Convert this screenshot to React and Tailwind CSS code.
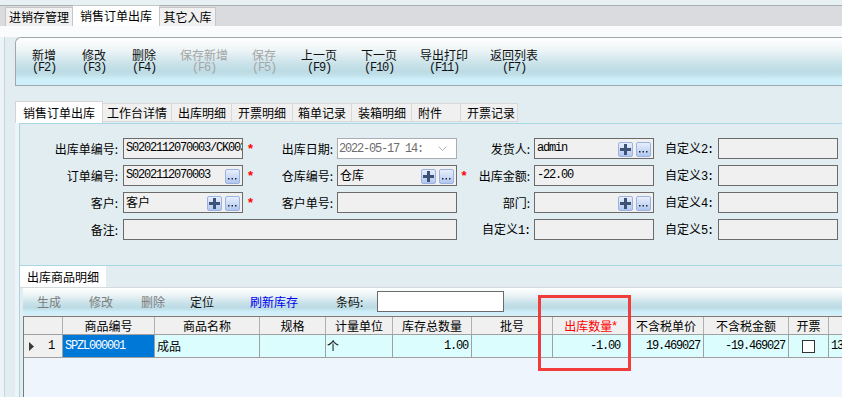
import React from "react";

const monoTxt = "font-['Liberation_Mono',monospace] text-[12px] tracking-[-1.2px]";

function PlusBtn() {
  return (
    <div className="w-[15px] h-[15px] shrink-0 border border-[#9ab3e0] rounded-[2px] bg-[linear-gradient(to_bottom,#e8effc,#b2c7ef)] flex items-center justify-center">
      <svg width="11" height="11" viewBox="0 0 11 11">
        <rect x="4" y="0" width="3" height="11" fill="#3d5276" />
        <rect x="0" y="4" width="11" height="3" fill="#3d5276" />
      </svg>
    </div>
  );
}

function DotsBtn() {
  return (
    <div className="w-[15px] h-[15px] shrink-0 border border-[#9ab3e0] rounded-[2px] bg-[linear-gradient(to_bottom,#e8effc,#b2c7ef)] flex items-end justify-center pb-[3px]">
      <svg width="9" height="2" viewBox="0 0 9 2">
        <rect x="0" y="0" width="1.5" height="1.5" fill="#1e2a3c" />
        <rect x="3.5" y="0" width="1.5" height="1.5" fill="#1e2a3c" />
        <rect x="7" y="0" width="1.5" height="1.5" fill="#1e2a3c" />
      </svg>
    </div>
  );
}

function Field({ w = "w-[120px]", ml = "", text, cn = false, plus = false, dots = false }) {
  return (
    <div className={`${w} ${ml} h-[21px] shrink-0 border border-[#6b6b6b] bg-[#f0f0f0] flex items-start pl-[2px] pt-[2px] overflow-hidden`}>
      {text ? (
        cn ? (
          <span className="text-[12px] leading-[14px] whitespace-nowrap">{text}</span>
        ) : (
          <span className={`${monoTxt} leading-[14px] whitespace-nowrap`}>{text}</span>
        )
      ) : null}
      {(plus || dots) && (
        <div className="ml-auto self-center flex gap-[3px] mr-[2px]">
          {plus && <PlusBtn />}
          {dots && <DotsBtn />}
        </div>
      )}
    </div>
  );
}

function DateField() {
  return (
    <div className="w-[120px] ml-[4px] h-[21px] shrink-0 border border-[#abadb3] bg-white flex items-center pl-[1px]">
      <span className={`${monoTxt} leading-[14px] text-[#6d6d6d] whitespace-nowrap`}>2022-05-17 14:</span>
      <svg className="ml-auto mr-[9px]" width="9" height="6" viewBox="0 0 9 6">
        <polyline points="0.5,0.5 4.5,4.5 8.5,0.5" fill="none" stroke="#b4b4b4" strokeWidth="1" />
      </svg>
    </div>
  );
}

function Label({ w, children }) {
  return (
    <div className={`${w} shrink-0 text-right text-[12px] leading-[14px] whitespace-nowrap`}>{children}</div>
  );
}

function Star({ w = "w-[15px]", show = true }) {
  return (
    <div className={`${w} shrink-0 flex justify-center`}>
      {show && <span className="text-[#ff0000] text-[13px] leading-[14px] font-['Liberation_Sans',sans-serif] font-bold">*</span>}
    </div>
  );
}

function Zdy({ n }) {
  return (
    <>
      自定义<span className={monoTxt}>{n}:</span>
    </>
  );
}

function TBtn({ w, label, k, disabled }) {
  return (
    <div className={`${w} shrink-0 flex flex-col items-center ${disabled ? "text-[#a5a5a5]" : "text-[#111]"}`}>
      <span className="text-[12px] leading-[12px] whitespace-nowrap">{label}</span>
      <span className={`${monoTxt} leading-[12px] mt-[1px] whitespace-nowrap`}>({k})</span>
    </div>
  );
}

const toolbarBg =
  "bg-[linear-gradient(to_bottom,#ffffff_0%,#eef5f7_25%,#c9e2e9_55%,#bcdbe4_72%,#c2e2ec_80%,#cfeffa_88%,#cfeffa_100%)]";

const cols = [
  { w: "w-[39px]", h: "" },
  { w: "w-[92px]", h: "商品编号" },
  { w: "w-[105px]", h: "商品名称" },
  { w: "w-[66px]", h: "规格" },
  { w: "w-[67px]", h: "计量单位" },
  { w: "w-[79px]", h: "库存总数量" },
  { w: "w-[81px]", h: "批号" },
  { w: "w-[76px]", h: "出库数量*", red: true },
  { w: "w-[75px]", h: "不含税单价" },
  { w: "w-[85px]", h: "不含税金额" },
  { w: "w-[40px]", h: "开票" },
  { w: "w-[80px]", h: "含税单价" },
];

export default function App() {
  return (
    <div className="relative w-[842px] h-[397px] overflow-hidden bg-[#e2edf1] text-black font-['Noto_Sans_CJK_SC','Noto_Sans',sans-serif]">
      {/* top tab bar */}
      <div className="h-[5px] bg-[#e7f0f3]" />
      <div className="h-[21px] bg-[#d9dbde] border-t border-[#a9b1b5] flex items-end pl-[5px]">
        <div className="w-[68px] h-[19px] bg-[#f0f0f0] border border-b-0 border-[#c6c6c6] flex items-center justify-center text-[12px] leading-[14px]">进销存管理</div>
        <div className="w-[87px] h-[21px] bg-white border-t border-r border-[#c6c6c6] flex items-center justify-center text-[12px] leading-[14px]">销售订单出库</div>
        <div className="w-[56px] h-[19px] bg-[#f0f0f0] border border-l-0 border-b-0 border-[#c6c6c6] flex items-center justify-center text-[12px] leading-[14px]">其它入库</div>
      </div>
      <div className="h-[11px] bg-[#f9fbfd]" />

      <div className="flex h-[360px]">
        {/* left gutter */}
        <div className="w-[15px] shrink-0 flex">
          <div className="w-[5px] bg-[#edf4f7] border-r border-[#c9d6dc]" />
        </div>

        <div className="flex-1 flex flex-col min-w-0">
          {/* main toolbar */}
          <div className={`h-[49px] shrink-0 border-t border-b border-l border-[#9fa8ad] rounded-tl-[6px] ${toolbarBg} flex items-center pl-[3px]`}>
            <TBtn w="w-[50px]" label="新增" k="F2" />
            <TBtn w="w-[50px]" label="修改" k="F3" />
            <TBtn w="w-[50px]" label="删除" k="F4" />
            <TBtn w="w-[70px]" label="保存新增" k="F6" disabled />
            <TBtn w="w-[50px]" label="保存" k="F5" disabled />
            <TBtn w="w-[60px]" label="上一页" k="F9" />
            <TBtn w="w-[60px]" label="下一页" k="F10" />
            <TBtn w="w-[70px]" label="导出打印" k="F11" />
            <TBtn w="w-[70px]" label="返回列表" k="F7" />
          </div>

          <div className="h-[15px] shrink-0" />

          {/* second tab row */}
          <div className="h-[22px] shrink-0 flex items-end text-[12px] leading-[14px]">
            <div className="w-[88px] h-[22px] bg-white border border-b-0 border-[#d4d4d4] flex items-center justify-center">销售订单出库</div>
            <div className="w-[69px] h-[19px] mb-[1px] bg-[#f0f0f0] border border-l-0 border-[#d9d9d9] flex items-center pl-[4px]">工作台详情</div>
            <div className="w-[60px] h-[19px] mb-[1px] bg-[#f0f0f0] border border-l-0 border-[#d9d9d9] flex items-center pl-[6px]">出库明细</div>
            <div className="w-[61px] h-[19px] mb-[1px] bg-[#f0f0f0] border border-l-0 border-[#d9d9d9] flex items-center pl-[6px]">开票明细</div>
            <div className="w-[59px] h-[19px] mb-[1px] bg-[#f0f0f0] border border-l-0 border-[#d9d9d9] flex items-center pl-[5px]">箱单记录</div>
            <div className="w-[60px] h-[19px] mb-[1px] bg-[#f0f0f0] border border-l-0 border-[#d9d9d9] flex items-center pl-[6px]">装箱明细</div>
            <div className="w-[49px] h-[19px] mb-[1px] bg-[#f0f0f0] border border-l-0 border-[#d9d9d9] flex items-center pl-[6px]">附件</div>
            <div className="w-[57px] h-[19px] mb-[1px] bg-[#f0f0f0] border border-l-0 border-[#d9d9d9] flex items-center pl-[6px]">开票记录</div>
          </div>

          {/* body */}
          <div className="flex-1 flex pl-[4px] bg-[#edf4f7] min-h-0">
            <div className="flex-1 flex flex-col border-l border-[#a9d3df] bg-[#e2edf1] min-w-0">
              {/* form */}
              <div className="h-[143px] shrink-0 border-t border-b border-[#a8d6e2] pt-[14px] flex flex-col gap-[6px]">
                <div className="flex items-center h-[21px]">
                  <Label w="w-[98px]">出库单编号:</Label>
                  <Field ml="ml-[5px]" text="S0202112070003/CK0031" />
                  <Star />
                  <Label w="w-[75px]">出库日期:</Label>
                  <DateField />
                  <Star w="w-[14px]" show={false} />
                  <Label w="w-[59px]">发货人:</Label>
                  <Field ml="ml-[4px]" text="admin" plus dots />
                  <Label w="w-[59px]"><Zdy n="2" /></Label>
                  <Field ml="ml-[5px]" />
                </div>
                <div className="flex items-center h-[21px]">
                  <Label w="w-[98px]">订单编号:</Label>
                  <Field ml="ml-[5px]" text="S0202112070003" dots />
                  <Star />
                  <Label w="w-[75px]">仓库编号:</Label>
                  <Field ml="ml-[4px]" text="仓库" cn plus dots />
                  <Star w="w-[14px]" />
                  <Label w="w-[59px]">出库金额:</Label>
                  <Field ml="ml-[4px]" text="-22.00" />
                  <Label w="w-[59px]"><Zdy n="3" /></Label>
                  <Field ml="ml-[5px]" />
                </div>
                <div className="flex items-center h-[21px]">
                  <Label w="w-[98px]">客户:</Label>
                  <Field ml="ml-[5px]" text="客户" cn plus dots />
                  <Star />
                  <Label w="w-[75px]">客户单号:</Label>
                  <Field ml="ml-[4px]" />
                  <Star w="w-[14px]" show={false} />
                  <Label w="w-[59px]">部门:</Label>
                  <Field ml="ml-[4px]" plus dots />
                  <Label w="w-[59px]"><Zdy n="4" /></Label>
                  <Field ml="ml-[5px]" />
                </div>
                <div className="flex items-center h-[21px]">
                  <Label w="w-[98px]">备注:</Label>
                  <Field w="w-[334px]" ml="ml-[5px]" />
                  <Star w="w-[14px]" show={false} />
                  <Label w="w-[59px]"><Zdy n="1" /></Label>
                  <Field ml="ml-[4px]" />
                  <Label w="w-[59px]"><Zdy n="5" /></Label>
                  <Field ml="ml-[5px]" />
                </div>
              </div>

              {/* detail tab */}
              <div className="h-[22px] shrink-0 flex items-end border-b border-[#d5dadc]">
                <div className="w-[86px] h-[21px] bg-white flex items-center justify-center text-[12px] leading-[14px]">出库商品明细</div>
              </div>

              {/* detail toolbar */}
              <div className={`ml-[3px] h-[27px] shrink-0 ${toolbarBg} flex items-center pl-[14px] text-[12px] leading-[14px]`}>
                <div className="w-[52px] shrink-0 text-[#7d7d7d]">生成</div>
                <div className="w-[52px] shrink-0 text-[#7d7d7d]">修改</div>
                <div className="w-[49px] shrink-0 text-[#7d7d7d]">删除</div>
                <div className="w-[60px] shrink-0 text-[#111]">定位</div>
                <div className="w-[86px] shrink-0 text-[#0000f0]">刷新库存</div>
                <div className="w-[41px] shrink-0 text-[#111]">条码:</div>
                <div className="w-[127px] h-[21px] shrink-0 bg-white border border-[#6b6b6b]" />
              </div>

              <div className="h-[1px] shrink-0" />

              {/* grid */}
              <div className="ml-[3px] flex-1 border-l border-t border-[#7a7a7a] bg-[#eef5fc] overflow-hidden">
                <div className="flex h-[18px] bg-[#f0f0f0] border-b border-[#a0a0a0]">
                  {cols.map((c, i) => (
                    <div
                      key={i}
                      className={`${c.w} shrink-0 border-r border-[#b0b0b0] flex items-center justify-center text-[12px] leading-[14px] whitespace-nowrap overflow-hidden ${c.red ? "text-[#ff0000]" : ""}`}
                    >
                      {c.red ? (
                        <>
                          出库数量<span className="font-['Liberation_Sans',sans-serif]">*</span>
                        </>
                      ) : (
                        c.h
                      )}
                    </div>
                  ))}
                </div>
                <div className="flex h-[23px] border-b border-[#a0a0a0] text-[12px] leading-[14px]">
                  <div className="w-[39px] shrink-0 bg-[#f0f0f0] border-r border-[#a0a0a0] flex items-center">
                    <svg className="ml-[5px]" width="5" height="9" viewBox="0 0 5 9">
                      <polygon points="0,0 5,4.5 0,9" fill="#3a3a3a" />
                    </svg>
                    <span className={`${monoTxt} ml-auto mr-[8px]`}>1</span>
                  </div>
                  <div className="w-[92px] shrink-0 bg-[#0078d7] border-r border-[#a0a0a0] flex items-center pl-[2px]">
                    <span className={`${monoTxt} text-white`}>SPZL000001</span>
                  </div>
                  <div className="w-[105px] shrink-0 bg-[#dcfdfd] border-r border-[#a0a0a0] flex items-center pl-[2px]">成品</div>
                  <div className="w-[66px] shrink-0 bg-[#dcfdfd] border-r border-[#a0a0a0]" />
                  <div className="w-[67px] shrink-0 bg-[#dcfdfd] border-r border-[#a0a0a0] flex items-center pl-[1px]">个</div>
                  <div className="w-[79px] shrink-0 bg-[#dcfdfd] border-r border-[#a0a0a0] flex items-center justify-end pr-[3px]">
                    <span className={monoTxt}>1.00</span>
                  </div>
                  <div className="w-[81px] shrink-0 bg-[#dcfdfd] border-r border-[#a0a0a0]" />
                  <div className="w-[76px] shrink-0 bg-[#dcfdfd] border-r border-[#a0a0a0] flex items-center justify-end pr-[8px]">
                    <span className={monoTxt}>-1.00</span>
                  </div>
                  <div className="w-[75px] shrink-0 bg-[#dcfdfd] border-r border-[#a0a0a0] flex items-center justify-end pr-[3px]">
                    <span className={monoTxt}>19.469027</span>
                  </div>
                  <div className="w-[85px] shrink-0 bg-[#dcfdfd] border-r border-[#a0a0a0] flex items-center justify-end pr-[3px]">
                    <span className={monoTxt}>-19.469027</span>
                  </div>
                  <div className="w-[40px] shrink-0 bg-[#dcfdfd] border-r border-[#a0a0a0] flex items-center justify-center">
                    <div className="w-[13px] h-[13px] bg-white border border-[#333]" />
                  </div>
                  <div className="w-[80px] shrink-0 bg-[#dcfdfd] border-r border-[#a0a0a0] flex items-center pl-[2px]">
                    <span className={monoTxt}>13.00</span>
                  </div>
                </div>
              </div>
            </div>
          </div>
        </div>
      </div>

      {/* red annotation */}
      <div className="absolute left-[538px] top-[295px] w-[93px] h-[76px] border-[3px] border-[#f23b3b]" />
    </div>
  );
}
